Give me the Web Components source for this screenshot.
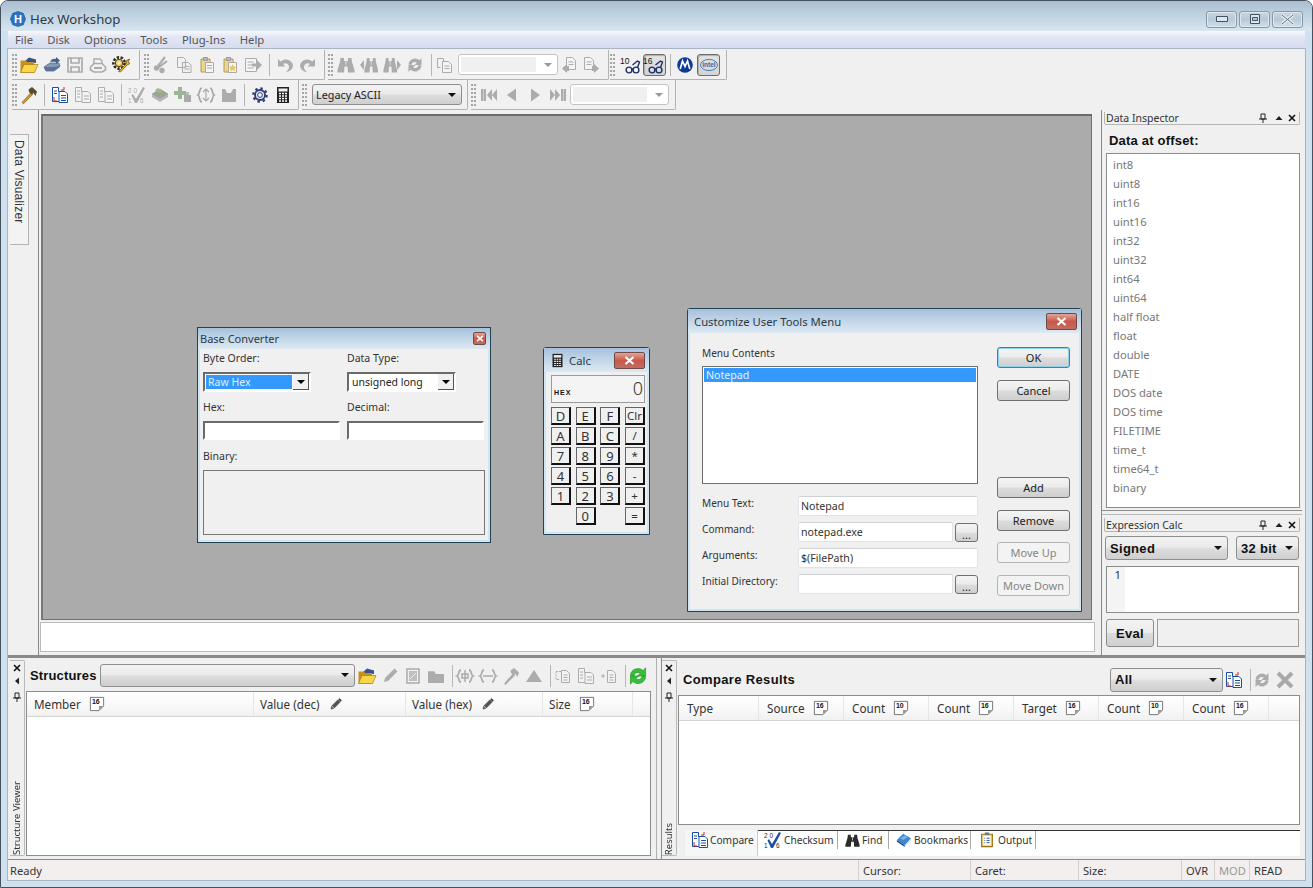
<!DOCTYPE html>
<html>
<head>
<meta charset="utf-8">
<title>Hex Workshop</title>
<style>
html,body{margin:0;padding:0;background:#fff}
body{width:1313px;height:888px;overflow:hidden;font:11.3px "Noto Sans","Liberation Sans",sans-serif;color:#333}
</style>
</head>
<body>
<hw-app>
  <hw-titlebar slot="top"></hw-titlebar>
  <hw-menubar slot="top"></hw-menubar>
  <hw-toolbars></hw-toolbars>
  <hw-workspace></hw-workspace>
  <hw-bottom></hw-bottom>
  <hw-status></hw-status>
</hw-app>
<script>
(function(){
  const HEAD = '"Liberation Sans",Arial,sans-serif';

  // icon drawings, all on an 18x18 box. mono ones follow currentColor so disabled is just grey
  const cycle = `<path d="M2.5 8.5A6.5 6.5 0 0 1 13.4 4.3L15.5 2v7h-7l2.4-2.4A3.4 3.4 0 0 0 5.500 9z"/><path d="M15.500 9.500A6.500 6.500 0 0 1 4.600 13.700L2.500 16V9h7l-2.400 2.400A3.400 3.400 0 0 0 12.500 9z"/>`;
  const bino = `<path d="M3.500 2h3.500v3h4V2h3.500l.5 4 2.500 8v2.500h-6.500l-.5-6H7.500l-.5 6H.500V14L3 6z"/><path d="M9 5v4" stroke="#f0f0f0" stroke-width=".8"/>`;
  const glasses = `<g fill="none" stroke="#1b2f63" stroke-width="1.400"><circle cx="9" cy="14" r="2.900"/><circle cx="16" cy="14" r="2.900"/><path d="M11.900 13.500c.6-.6 1.100-.6 1.300 0M17.500 11.500l2-5.500-2-1-5 4"/></g>`;
  const page = t => `<path d="M.5.500h17v11l-6 6H.5z" fill="#fff" stroke="#555"/><path d="M11.500 17.500v-6h6z" fill="#999"/><text x="2.500" y="9.500" font-size="9" font-family="Liberation Sans" font-weight="bold" fill="#111">${t}</text>`;
  const ICONS = {
    open:`<path d="M4 6l5-4.500 7 2V7z" fill="#34528d"/><path d="M.5 4.500h5.500l1 1.500h7V16.500H.5z" fill="#c88f1a"/><path d="M.5 16.500L4 8.500h14l-3.500 8z" fill="#f8d649" stroke="#ab7a12" stroke-width=".7"/>`,
    drive:`<path d="M1 11l6-4h9l1 3-6 5H3z" fill="#8498b8" stroke="#4c5f82" stroke-width=".7"/><path d="M1 11h10l6-1v1l-6 4H3z" fill="#5e7196"/><path d="M7 6c1-3 4-4 6-3V1l4 3.500L13 8V6c-2-.5-4-.5-6 0z" fill="#46618f"/>`,
    save:`<path d="M2 2h14v14H2zM5 2v5h8V2M5 16v-5h8v5" fill="none" stroke="currentColor" stroke-width="1.700"/>`,
    print:`<path d="M5 8V3h6l2 2v3" fill="none" stroke="currentColor" stroke-width="1.400"/><path d="M1.500 11L5 7.500h8l3.500 3.500v3L13 16H5l-3.500-2z" fill="none" stroke="currentColor" stroke-width="1.600"/><path d="M5 11h8v2H5z" fill="currentColor"/>`,
    tools:`<circle cx="7" cy="7" r="5.600" fill="none" stroke="#2e2a1c" stroke-width="2.600" stroke-dasharray="2.400 1.500"/><circle cx="7" cy="7" r="3.700" fill="#f5d25a" stroke="#4a3c1a" stroke-width="1"/><circle cx="7" cy="7" r="1.500" fill="#f0f0f0"/><path d="M6.500 15.500l7.500-7.500 .5-3.500L17.500 3l-1.500 3 2 1.500-3 1.500-6.500 7z" fill="#efb92c" stroke="#6d4d10" stroke-width=".8"/>`,
    cut:`<path d="M13 1L6 10M15 5L6 12" stroke="currentColor" stroke-width="2.200" fill="none"/><circle cx="4.500" cy="12" r="2.700" fill="currentColor"/><circle cx="10" cy="14.500" r="2.700" fill="currentColor"/>`,
    copy:`<g fill="#f0f0f0" stroke="currentColor"><path d="M2.500 1.500h6l2 2v8h-8zM7.500 6.500h6l2.500 2.500v7.500H7.500z"/></g><path d="M9.500 10.500h5M9.500 13h5" stroke="currentColor"/>`,
    paste:`<path d="M3 3h9v13H3z" fill="#ecd68c" stroke="#b59a55"/><path d="M5.500 1.500h4v3h-4z" fill="#bbb" stroke="#999"/><path d="M7.500 6.500h8v10h-8z" fill="#f4f4f4" stroke="#aaa"/><path d="M9 9.500h5M9 12h5" stroke="#aaa"/>`,
    pastes:`<path d="M3 3h9v13H3z" fill="#ecd68c" stroke="#b59a55"/><path d="M5.500 1.500h4v3h-4z" fill="#bbb" stroke="#999"/><path d="M7.500 6.500h8v10h-8z" fill="#f4f4f4" stroke="#aaa"/><path d="M11.500 8l1.200 2.500 2.800.3-2 1.900.5 2.800-2.500-1.400-2.500 1.400.5-2.800-2-1.900 2.800-.3z" fill="#e8c956"/>`,
    insert:`<path d="M1.500 2.500h11v13h-11z" fill="#f6f6f6" stroke="currentColor"/><path d="M3.500 6h6M3.500 9h6M3.500 12h6" stroke="currentColor"/><path d="M8 7.500h5V4l5 5-5 5v-3.500H8z" fill="currentColor"/>`,
    undo:`<path d="M2 3v7.500h7.500L7 8a3.800 3.800 0 0 1 6 2.500c.2 2-1 3.800-3 5.500 4.500-.5 7-3.500 7-7A7.500 7.500 0 0 0 4.700 5.500z" fill="currentColor"/>`,
    redo:`<g transform="matrix(-1 0 0 1 18 0)"><path d="M2 3v7.500h7.500L7 8a3.800 3.800 0 0 1 6 2.500c.2 2-1 3.800-3 5.500 4.500-.5 7-3.500 7-7A7.500 7.500 0 0 0 4.700 5.500z" fill="currentColor"/></g>`,
    bino:`<g fill="currentColor">${bino}</g>`,
    binol:`<g fill="currentColor"><g transform="translate(4 0) scale(.8 1)">${bino}</g><path d="M0 9l4-5v10z"/></g>`,
    binor:`<g fill="currentColor"><g transform="scale(.8 1)">${bino}</g><path d="M18 9l-4-5v10z"/></g>`,
    repl:`<g fill="currentColor">${cycle}</g>`,
    docr:`<path d="M1.500 2.500h6v5M1.500 2.500v9h3" fill="none" stroke="currentColor"/><path d="M6.500 5.500h6l3 3v8h-9z" fill="#f4f4f4" stroke="currentColor"/><path d="M8.500 10h5M8.500 12.500h5" stroke="currentColor"/>`,
    docl:`<path d="M5.500 1.500h6l3 3v9h-9z" fill="#f4f4f4" stroke="currentColor"/><path d="M7.500 6h5M7.500 8.500h5" stroke="currentColor"/><path d="M6 8L1 12.500l5 4.500v-2h2v-5H6z" fill="currentColor"/>`,
    docrr:`<path d="M2.500 1.500h6l3 3v9h-9z" fill="#f4f4f4" stroke="currentColor"/><path d="M4.500 6h5M4.500 8.500h5" stroke="currentColor"/><path d="M12 8l5 4.500-5 4.500v-2h-2v-5h2z" fill="currentColor"/>`,
    g10:`<svg x="-3" y="0" width="21" height="18" viewBox="0 0 21 18">${glasses}<text x="0" y="7.500" font-size="8.500" font-family="Liberation Sans" fill="#111">10</text></svg>`,
    g16:`<svg x="-3" y="0" width="21" height="18" viewBox="0 0 21 18">${glasses}<text x="0" y="7.500" font-size="8.500" font-family="Liberation Sans" fill="#111">16</text></svg>`,
    moto:`<circle cx="9" cy="9" r="7.800" fill="#0c3a96"/><path d="M4.200 13L6.500 5 9 10.500 11.500 5l2.300 8" fill="none" stroke="#fff" stroke-width="1.700"/>`,
    intel:`<ellipse cx="9" cy="9" rx="8.500" ry="5.600" fill="none" stroke="#2f7ab8" stroke-width=".9"/><text x="9" y="11.300" text-anchor="middle" font-size="6.500" font-family="Liberation Sans" font-weight="bold" fill="#1d6db0">intel</text>`,
    hammer:`<path d="M2 16.500l9-10 1.800 1.800-9.300 9.500z" fill="#d6962a" stroke="#6e4a0e" stroke-width=".6"/><path d="M8.500 3.500L12 1l5 4.500-1.500 4.500-2-3-2 1.500-2.500-2.500z" fill="#5a4a36"/>`,
    cmp:`<path d="M1.500 1.500h6v4h3v10h-9z" fill="#fff" stroke="#1c4f9c"/><path d="M8 5.500h6l2.500 2.500v8.500H8z" fill="#fff" stroke="#1c4f9c"/><path d="M3 5h3M3 7.500h3M10 9.500h5M10 12h5M10 14.500h5" stroke="#1c4f9c"/><path d="M3 11v4h3" fill="none" stroke="#d02525"/><path d="M13 1v3h-3" fill="none" stroke="#d02525"/>`,
    cmpm:`<path d="M1.500 1.500h6v4h3v10h-9z" fill="#f4f4f4" stroke="currentColor"/><path d="M8 5.500h6l2.500 2.500v8.500H8z" fill="#f4f4f4" stroke="currentColor"/><path d="M10 10h5M10 13h5M3 5h3M3 8h3M3 11h3" stroke="currentColor"/>`,
    check:`<text x="0" y="6.500" font-size="6.500" font-family="Liberation Sans" fill="currentColor">2 0</text><text x="0" y="16.500" font-size="6.500" font-family="Liberation Sans" fill="currentColor">1</text><path d="M5 8l3 5 7-12 2 1-8 15H7L3.500 9.500z" fill="var(--c,currentColor)"/><text x="12" y="16.500" font-size="6.500" font-family="Liberation Sans" fill="currentColor">6</text>`,
    stack:`<path d="M1 8l8-5 8 5-8 5z" fill="#9aa78e" stroke="#8a8a8a" stroke-width=".5"/><path d="M1 8v3l8 5 8-5V8l-8 5z" fill="#b6b6b6"/><path d="M7 2l5 3-3 2-5-3z" fill="#a6b593"/>`,
    plus:`<path d="M4 1h4v4h4v4H8v4H4V9H0V5h4z" fill="#9cb596"/><path d="M10 9h7v7h-7z" fill="#aaa"/><path d="M12 6h3v3h-3z" fill="#bbb"/>`,
    brace:`<path d="M5 2C2 2 3 8 1 9c2 1 1 7 4 7M13 2c3 0 2 6 4 7-2 1-1 7-4 7" fill="none" stroke="#9fb09a" stroke-width="1.700"/><path d="M6 6l3-3 3 3M6 12l3 3 3-3M9 3v12" fill="none" stroke="#aaa" stroke-width="1.200"/>`,
    chart:`<path d="M2 3h3l2 4h4l2-4h3v13H2z" fill="currentColor"/>`,
    gear:`<g transform="translate(9 9)"><circle r="5" fill="#e6e9f4" stroke="#2e3c78" stroke-width="1.800"/><circle r="6.600" fill="none" stroke="#2e3c78" stroke-width="2.400" stroke-dasharray="2.400 2.800"/><circle r="2.400" fill="#f4f4f4" stroke="#2e3c78"/></g>`,
    calc:`<path d="M3 1h12v16H3z" fill="#222"/><path d="M4.500 2.500h9v3h-9z" fill="#eee"/><path d="M5 7.500h2M8 7.500h2M11 7.500h2M5 10h2M8 10h2M11 10h2M5 12.500h2M8 12.500h2M11 12.500h2M5 15h2M8 15h2M11 15h2" stroke="#fff" stroke-width="1.300"/>`,
    first:`<path d="M1 3h2.500v12H1zM4 3h2v12H4zM7 9l5-6v12zM12 9l5-6v12z" fill="currentColor"/>`,
    prev:`<path d="M4 9l9-6.500v13z" fill="currentColor"/>`,
    next:`<path d="M14 9L5 2.500v13z" fill="currentColor"/>`,
    last:`<g transform="matrix(-1 0 0 1 18 0)"><path d="M1 3h2.500v12H1zM4 3h2v12H4zM7 9l5-6v12zM12 9l5-6v12z" fill="currentColor"/></g>`,
    pencil:`<path d="M3 15l1-4 8-8 3 3-8 8z" fill="currentColor"/><path d="M12 3l1.500-1.500 3 3L15 6" fill="currentColor"/>`,
    penb:`<path d="M2.500 15.500l1-4 8-8 3 3-8 8z" fill="#555" stroke="#222" stroke-width=".5"/><path d="M3.500 11.500l3 3" stroke="#eee"/><path d="M12 3l1.500-1.500 3 3L15 6z" fill="#333"/>`,
    sheet:`<path d="M3 2h12v14H3z" fill="none" stroke="currentColor" stroke-width="1.500"/><path d="M5 4h8v10H5z" fill="currentColor" opacity=".7"/><path d="M6 12l6-6" stroke="#eee"/>`,
    folderg:`<path d="M1 5h6l2 2h8v9H1z" fill="currentColor"/><path d="M1 4h6l1.500 2H1z" fill="currentColor" opacity=".75"/>`,
    bracea:`<path d="M5 3C2 3 3.500 8 1 9c2.500 1 1 6 4 6M13 3c3 0 1.500 5 4 6-2.500 1-1 6-4 6" fill="none" stroke="currentColor" stroke-width="1.800"/><path d="M6 7h6v4H6zM9 3v12" fill="none" stroke="currentColor" stroke-width="1.500"/>`,
    braceb:`<path d="M5 3C2 3 3.500 8 1 9c2.500 1 1 6 4 6M13 3c3 0 1.500 5 4 6-2.500 1-1 6-4 6" fill="none" stroke="currentColor" stroke-width="1.800"/><path d="M4 9h10" stroke="currentColor" stroke-width="1.500"/>`,
    hammerg:`<path d="M2 16.500l9-10 2 2-9.500 9.500z" fill="currentColor"/><path d="M8.500 3.500L12 1l5 4.500-1.500 4.500-2-3-2 1.500-2.500-2.500z" fill="currentColor"/>`,
    tri:`<path d="M9 3l8 12H1z" fill="currentColor"/>`,
    dl:`<path d="M2 4.500h5M2 4.500v8h3" fill="none" stroke="currentColor" stroke-dasharray="2 1"/><path d="M7.500 3.500h5l3 3v9h-8z" fill="#f4f4f4" stroke="currentColor"/><path d="M9.500 8h4M9.500 10.500h4M9.500 13h4" stroke="currentColor"/>`,
    dm:`<path d="M1 9h4M3 7v4" stroke="currentColor"/><path d="M7.500 3.500h5l3 3v9h-8z" fill="#f4f4f4" stroke="currentColor"/><path d="M9.500 8h4M9.500 10.500h4M9.500 13h4" stroke="currentColor"/>`,
    refresh:`<g fill="#35c035" stroke="#1c8a1c" stroke-width=".5"><g transform="translate(-1.500 -1.500) scale(1.170)">${cycle}</g></g>`,
    book:`<path d="M1 9l7-7 9 5-7 8z" fill="#3f86cf"/><path d="M1 9l9 6v2l-9-6z" fill="#1d4c86"/><path d="M10 15l7-8v2l-7 8z" fill="#d8e4f2"/><path d="M5 7l5-3 3 2-5 3z" fill="#7db3e6"/>`,
    output:`<path d="M3 2.500h12v14H3z" fill="#f4dd8a" stroke="#9c6f11" stroke-width="1.300"/><path d="M5 4.500h8v10H5z" fill="#fff"/><path d="M6.500 0.500h5v3h-5z" fill="#777"/><path d="M6 7h1M8.500 7H12M6 9.500h1M8.500 9.500H12M6 12h1M8.500 12H12" stroke="#1d4c86"/>`,
    n16:page('16'),
    n10:page('10'),
    x:`<path d="M2 2l14 14M16 2L2 16" stroke="#a9a9a9" stroke-width="4"/>`,
    hex:`<path d="M9 .5l6 2 2.500 6.500L15 15.500l-6 2-6-2L.5 9 3 2.500z" fill="#2a73c4" stroke="#134a8a" stroke-width=".6"/>`
  };

  // little helper so each element is just: tag, css, markup
  function comp(tag, css, html) {
    customElements.define(tag, class extends HTMLElement {
      connectedCallback() {
        if (this.shadowRoot) return;
        const root = this.attachShadow({mode:'open'});
        root.innerHTML = `<style>${css}</style>` + (typeof html === 'function' ? html(this) : html);
      }
    });
  }
  const at = (el, n, d) => el.hasAttribute(n) ? el.getAttribute(n) : d;

  comp('hw-app', `
    :host{display:flex;flex-direction:column;width:1313px;height:888px;box-sizing:border-box;
      background:#cfe0ee;border:1px solid #46525f;border-radius:8px 8px 0 0;overflow:hidden}
    .client{flex:1;display:flex;flex-direction:column;margin:0 7px 7px 7px;background:#f0f0f0;box-shadow:0 0 0 1px #a9b5c0;min-height:0}
  `, `<slot name="top"></slot><div class="client"><slot></slot></div>`);

  comp('hw-icon', `
    :host{display:inline-flex;align-items:center;justify-content:center;flex:none;width:23px;height:22px;color:#2b2b2b;box-sizing:border-box}
    :host([off]){color:#a0a0a0}
    :host([off]) svg.c{filter:grayscale(.6) opacity(.85)}
    :host([on]){background:linear-gradient(#e4e4e4,#d4d4d4);border:1px solid #6d6d6d;border-radius:3px;box-shadow:inset 1px 1px 1px #aaa}
    svg{display:block;overflow:visible}
  `, el => {
    const s = at(el,'s','18');
    if (el.hasAttribute('w')) el.style.width = at(el,'w') + 'px';
    if (el.hasAttribute('h')) el.style.height = at(el,'h') + 'px';
    return `<svg class="c" width="${s}" height="${s}" viewBox="0 0 18 18">${ICONS[at(el,'name')]||''}</svg>`;
  });

  comp('hw-titlebar', `
    :host{display:flex;align-items:center;height:30px;box-sizing:border-box;padding:6px 9px 0 9px;
      background:linear-gradient(#a9bdd0,#bccfde 40%,#d8e6f0)}
    .t{margin-left:4px;color:#2f3a44;font-size:13.200px}
    .h{position:relative;width:16px;height:16px;flex:none}
    .h b{position:absolute;inset:0;text-align:center;color:#fff;font:bold 11px/16px ${HEAD}}
    .b{margin-left:auto;display:flex;gap:2px}
    .b i{display:flex;align-items:center;justify-content:center;width:29px;height:15px;border:1px solid #8797a6;border-radius:3px;background:linear-gradient(#c9d6e2,#b7c8d6 50%,#d3e0ea);box-shadow:inset 0 0 0 1px #dfe8ef}
  `, `<div class="h"><hw-icon name="hex" s="16" w="16" h="16"></hw-icon><b>H</b></div><span class="t">Hex Workshop</span>
      <div class="b">
        <i><svg width="12" height="6"><path d="M.5.500h11v5H.5z" fill="#dfe6ec" stroke="#3f5266"/></svg></i>
        <i><svg width="12" height="10"><path d="M1.500.500h9v9h-9z" fill="#dfe6ec" stroke="#3f5266"/><path d="M3.500 3.500h5v3h-5z" fill="#b7c8d6" stroke="#3f5266"/></svg></i>
        <i><svg width="15" height="11"><path d="M2 1l11 9M13 1L2 10" stroke="#e6edf3" stroke-width="3.500"/><path d="M2 1l11 9M13 1L2 10" stroke="#5b6d80"/></svg></i>
      </div>`);

  comp('hw-menubar', `
    :host{display:flex;align-items:center;height:18px;margin:0 7px;box-sizing:border-box;font-size:11.300px;color:#555;
      background:linear-gradient(#f7f9fc,#e2e6f4 35%,#d7dcef);border-bottom:1px solid #a7a7a7}
    span{padding:0 0 0 7px;margin-right:7.200px}
  `, ['File','Disk','Options','Tools','Plug-Ins','Help'].map(m=>`<span>${m}</span>`).join(''));

  comp('hw-band', `
    :host{display:flex;align-items:center;height:30px;box-sizing:border-box;background:#f1f1f1;
      border-right:1px solid #b3b3b3;border-bottom:1px solid #b3b3b3;border-bottom-right-radius:2px;flex:none;padding-right:var(--pr,6px)}
    .g{width:5px;height:24px;flex:none;background:radial-gradient(circle at 1px 1px,#a5a5a5 .8px,transparent 1px) 0 1px/3px 4px}
  `, `<div class="g"></div><slot></slot>`);

  comp('hw-sep', `:host{display:block;flex:none;width:1px;height:22px;background:#b5b5b5;margin:0 var(--mr,4px) 0 var(--ml,4px)}`, ``);

  comp('hw-combo', `
    :host{display:flex;align-items:center;flex:none;box-sizing:border-box;height:21px;border:1px solid #8e8e8e;border-radius:3px;padding-left:3px;
      background:linear-gradient(#f3f3f3,#ebebeb 45%,#dcdcdc 55%,#cfcfcf);color:#222;font-size:10.800px;overflow:hidden}
    :host([bold]){font:bold 13px ${HEAD};letter-spacing:.3px;color:#111;padding-left:4px}
    :host([off]){background:#fff;border-color:#c4c4c4;padding:2px 0 2px 2px}
    .v{flex:1;white-space:nowrap}
    :host([off]) .v{align-self:stretch;background:#f0f0f0;flex:none;width:78%}
    .a{margin-left:auto;width:0;height:0;border:4px solid transparent;border-top:4px solid #111;border-bottom:0;margin-right:5px}
    :host([off]) .a{border-top-color:#999}
  `, el => {
    el.style.width = at(el,'w','100') + 'px';
    if (el.hasAttribute('h')) el.style.height = at(el,'h') + 'px';
    return `<span class="v">${at(el,'v','')}</span><span class="a"></span>`;
  });

  comp('hw-toolbars', `
    :host{display:flex;flex-direction:column;flex:none}
    .r{display:flex;height:31px;padding:1px 0 0 4px;box-sizing:border-box}
    .r + .r{height:30px;padding-top:0}
    hw-band + hw-band{margin-left:4px}
    .r + .r hw-sep{--mr:3px}
  `, () => {
    const row = (names, w) => names.split(' ').map(n => {
      if (n === '|') return '<hw-sep></hw-sep>';
      const off = n[0] === '-';
      return `<hw-icon name="${n.replace('-','')}"${off?' off':''}${w?` w="${w}"`:''}></hw-icon>`;
    }).join('');
    return `<div class="r">
      <hw-band style="--pr:7px">${row('open drive -save -print tools')}</hw-band>
      <hw-band style="--pr:5px">${row('-cut -copy paste pastes -insert')}<hw-sep style="--ml:5px;--mr:3px"></hw-sep>${row('-undo -redo')}</hw-band>
      <hw-band style="--pr:7px;margin-left:3px"><span style="width:1px"></span>${row('-bino -binol -binor -repl')}<hw-sep style="--ml:5px;--mr:2px"></hw-sep><hw-icon name="docr" off w="22" style="margin-right:2px"></hw-icon><hw-combo off w="100" style="margin-right:1px"></hw-combo>${row('-docl -docrr', 21)}</hw-band>
      <hw-band style="--pr:6px;margin-left:1px"><hw-icon name="g10" w="22" style="margin-left:6px"></hw-icon><hw-icon name="g16" on></hw-icon><hw-sep></hw-sep><hw-icon name="moto" w="19" style="margin-right:3px"></hw-icon><hw-icon name="intel" on></hw-icon></hw-band>
    </div>
    <div class="r">
      <hw-band style="--pr:4px">${row('hammer | cmp -cmpm -cmpm | -check stack plus brace -chart | gear calc')}</hw-band>
      <hw-band style="--pr:5px;margin-left:3px"><hw-combo w="150" v="Legacy ASCII" style="margin-left:5px"></hw-combo></hw-band>
      <hw-band style="--pr:6px;margin-left:3px"><span style="width:1.500px"></span>${row('-first -prev -next -last')}<hw-combo off w="99"></hw-combo></hw-band>
    </div>`;
  });

  comp('hw-workspace', `
    :host{display:flex;flex:1;min-height:0}
    .left{width:30px;flex:none;padding:24px 0 0 2px;box-sizing:border-box}
    .tab{writing-mode:vertical-rl;width:19px;height:111px;box-sizing:border-box;font:12px ${HEAD};letter-spacing:.2px;color:#333;padding:5px 1px 0 0;
      border:1px solid #b5b5b5;border-left:0;line-height:17px;background:#f3f3f3}
    .mid{width:1060px;flex:none;display:flex;flex-direction:column;border-left:1px solid #8a8a8a;box-sizing:border-box;padding:4px 6px 3px 2px;position:relative}
    .right{flex:1;margin-left:3px;border-left:1px solid #8a8a8a;display:flex}
    .msg{height:28px;flex:none;background:#fff;border:1px solid #bcbcbc;margin:2px -3px 0 -1px}
  `, `<div class="left"><div class="tab">Data Visualizer</div></div>
      <div class="mid"><hw-mdi></hw-mdi><div class="msg"></div></div>
      <div class="right"><hw-inspector></hw-inspector></div>`);

  comp('hw-mdi', `
    :host{display:block;position:relative;flex:1;background:#ababab;border:1px solid #707070;border-top:2px solid #6a6a6a;border-left:2px solid #777;box-sizing:border-box}
  `, `<hw-base-converter></hw-base-converter><hw-calc></hw-calc><hw-tools-dialog></hw-tools-dialog>`);

  // floating mdi child / dialog frame. x,y are its place on the grey desktop
  comp('hw-window', `
    :host{position:absolute;display:flex;flex-direction:column;box-sizing:border-box;background:#f0f0f0;
      border:1px solid #24424f;box-shadow:inset 0 0 0 2px #cfe6f3;border-radius:var(--r,0)}
    .bar{display:flex;align-items:center;height:var(--bh,21px);flex:none;padding:0 4px 0 var(--bp,2px);box-sizing:border-box;
      background:linear-gradient(#a6c1dc,#c2d6e8 50%,#dde9f3);color:#2c3a46;font-size:var(--tf,11.300px)}
    .x{margin-left:auto;display:flex;align-items:center;justify-content:center;box-sizing:border-box;height:var(--ch,17px);width:var(--cw,31px);
      border:1px solid #6e4b48;border-radius:2px;background:linear-gradient(#e3a598,#c9594a 50%,#c06e62);color:#fff}
    .x svg{display:block;width:var(--xw,11px)}
    .body{flex:1;min-height:0;margin:0 2px 2px 2px}
  `, el => {
    el.style.left = at(el,'x') + 'px'; el.style.top = at(el,'y') + 'px';
    el.style.width = at(el,'w') + 'px'; el.style.height = at(el,'h') + 'px';
    return `<div class="bar"><slot name="icon"></slot><span>${at(el,'label')}</span>
      <span class="x"><svg width="11" height="9" viewBox="0 0 11 9"><path d="M1.500 1l8 7M9.500 1l-8 7" stroke="#fff" stroke-width="2.200"/></svg></span></div>
      <div class="body"><slot></slot></div>`;
  });

  comp('hw-input', `
    :host{display:flex;align-items:center;box-sizing:border-box;height:20px;background:#fff;padding-left:2px;font-size:10.600px;color:#333;
      border:1px solid #e2e3ea;border-top-color:#d0d1d6;border-radius:2px}
    :host([sunken]){border-radius:0;border:2px solid #fff;border-left-color:#6a6a6a;border-top-color:#6a6a6a;height:20px}
  `, `<slot></slot>`);

  comp('hw-btn', `
    :host{display:flex;align-items:center;justify-content:center;box-sizing:border-box;height:21px;font-size:11px;color:#222;
      border:1px solid #707070;border-radius:3px;background:linear-gradient(#f4f4f4,#ebebeb 48%,#dcdcdc 52%,#cfcfcf)}
    :host([def]){border:1px solid #3c7fb1;box-shadow:inset 0 0 0 1px #8fd2ea}
    :host([off]){border-color:#b5b5b5;background:#f3f3f3;color:#858585}
  `, `<slot></slot>`);

  comp('hw-oldcombo', `
    :host{display:flex;box-sizing:border-box;width:108px;height:20px;background:#fff;border:2px solid #fff;border-left-color:#6a6a6a;border-top-color:#6a6a6a;font-size:10.500px;color:#222}
    .v{flex:1;padding-left:2px;line-height:14px;margin:1px;white-space:nowrap}
    :host([sel]) .v{background:#3399ff;color:#dff0ff}
    .a{flex:none;width:16px;display:flex;align-items:center;justify-content:center;background:#f0f0f0;border-right:1px solid #555;border-bottom:1px solid #555;box-sizing:border-box}
    .a i{width:0;height:0;border:4px solid transparent;border-top:4px solid #000;border-bottom:0}
  `, el => `<span class="v">${at(el,'v')}</span><span class="a"><i></i></span>`);

  comp('hw-base-converter', `
    :host{display:contents}
    .f{display:grid;grid-template-columns:137px 137px;column-gap:7px;padding:0 0 0 3px;font-size:10.500px;color:#333}
    label{display:block;height:14px;line-height:14px}
    .a{margin-top:2px}.b{margin-top:8px}.c{margin-top:7px}
    .bin{margin:7px 3px 0 3px;height:65px;box-sizing:border-box;border:1px solid #777;background:#f0f0f0}
    .l{margin:9px 0 0 3px;height:14px;line-height:14px;color:#333;font-size:10.500px}
    hw-input{width:137px;height:19px}
  `, `<hw-window x="154" y="211" w="294" h="216" label="Base Converter" style="--cw:13px;--ch:13px;--xw:8px;--bh:21px;--tf:11px">
      <div class="f">
        <label class="a">Byte Order:</label><label class="a">Data Type:</label>
        <hw-oldcombo class="c" v="Raw Hex" sel></hw-oldcombo><hw-oldcombo class="c" v="unsigned long" style="width:109px"></hw-oldcombo>
        <label class="b">Hex:</label><label class="b">Decimal:</label>
        <hw-input class="c" sunken></hw-input><hw-input class="c" sunken></hw-input>
      </div>
      <div class="l">Binary:</div>
      <div class="bin"></div>
    </hw-window>`);

  comp('hw-calc', `
    :host{display:contents}
    .d{margin:3px 2px 0 5px;height:28px;box-sizing:border-box;border:1px solid #9a9a9a;background:#f4f4f4;display:flex;align-items:flex-end;justify-content:space-between;padding:0 1px 0 2px}
    .d small{font:bold 7px ${HEAD};letter-spacing:1px;color:#111;margin-bottom:6px}
    .d b{font:300 18px "Noto Sans",sans-serif;color:#333;line-height:24px;margin-bottom:2px}
    .k{display:grid;grid-template-columns:repeat(4,20px);grid-auto-rows:18px;gap:2px 4.700px;margin:4px 0 0 5px}
    .k span{display:flex;align-items:center;justify-content:center;box-sizing:border-box;border:1px solid #666;border-right:2px solid #111;border-bottom:2px solid #111;font-size:13px;color:#333}
    .k .e{visibility:hidden}
    .k .s{font-size:11.500px}
  `, () => {
    const keys = 'D E F Clr A B C / 7 8 9 * 4 5 6 - 1 2 3 + _ 0 _ ='.split(' ');
    return `<hw-window x="500" y="231" w="107" h="188" label="Calc" style="--cw:31px;--bh:24px;--tf:11.300px;--r:3px 3px 0 0">
      <hw-icon slot="icon" name="calc" s="15" w="20" h="16" style="margin-right:2px;margin-left:1px"></hw-icon>
      <div class="d"><small>HEX</small><b>0</b></div>
      <div class="k">${keys.map(k=>k==='_'?'<span class="e"></span>':`<span class="${k.length>1||'/*-+='.includes(k)?'s':''}">${k}</span>`).join('')}</div>
    </hw-window>`;
  });

  comp('hw-tools-dialog', `
    :host{display:contents}
    .m{display:flex;padding:0;height:100%;box-sizing:border-box;font-size:10.100px;color:#333}
    .l{width:276px;margin:13px 0 0 12px;flex:none}
    .cap{height:14px;line-height:14px}
    .list{margin-top:6px;height:118px;box-sizing:border-box;border:1px solid #6f6f6f;background:#fff;padding:1px;font-size:10.600px}
    .list div{background:#3399ff;color:#e6f3ff;height:14px;line-height:14px;padding-left:2px}
    .g{display:grid;grid-template-columns:96px 1fr;row-gap:6px;margin-top:12px;align-items:start}
    .g span{line-height:14px;margin-top:0}
    .row{display:flex;gap:2px}
    .row hw-input{flex:1}
    .row hw-btn{width:23px;flex:none;height:19px;align-items:flex-end;margin-top:1px;line-height:12px}
    .r{margin:14px 0 0 19px;width:73px;display:flex;flex-direction:column}
    .r hw-btn + hw-btn{margin-top:12px}
    .r .gap{margin-top:76px !important}
    .r hw-btn.t{margin-top:11px}
  `, `<hw-window x="644" y="192" w="395" h="304" label="Customize User Tools Menu" style="--cw:31px;--bh:24px;--bp:6px;--r:3px 3px 0 0">
      <div class="m">
        <div class="l">
          <div class="cap">Menu Contents</div>
          <div class="list"><div>Notepad</div></div>
          <div class="g">
            <span>Menu Text:</span><hw-input>Notepad</hw-input>
            <span>Command:</span><div class="row"><hw-input>notepad.exe</hw-input><hw-btn>...</hw-btn></div>
            <span>Arguments:</span><hw-input>$(FilePath)</hw-input>
            <span>Initial Directory:</span><div class="row"><hw-input></hw-input><hw-btn>...</hw-btn></div>
          </div>
        </div>
        <div class="r">
          <hw-btn def>OK</hw-btn><hw-btn>Cancel</hw-btn>
          <hw-btn class="gap">Add</hw-btn><hw-btn>Remove</hw-btn><hw-btn off class="t">Move Up</hw-btn><hw-btn off>Move Down</hw-btn>
        </div>
      </div>
    </hw-window>`);

  // caption of a docked pane, with pin / up / close
  comp('hw-dockhead', `
    :host{display:flex;align-items:center;height:14px;flex:none;box-sizing:border-box;border:1px solid #b5b5b5;border-top:0;border-radius:0 0 2px 2px;padding:0 3px 0 1px;font-size:10.500px;color:#333;line-height:12px}
    .c{margin-left:auto;display:flex;align-items:center}
  `, el => `<span>${at(el,'label')}</span><span class="c">
      <svg style="margin-right:8px" width="8" height="10"><path d="M2 1h4v5H2zM0 6h8M4 6v4" fill="none" stroke="#222"/></svg>
      <svg style="margin-right:5px" width="8" height="6"><path d="M4 1l3.500 4H.500z" fill="#222"/></svg>
      <svg width="8" height="8"><path d="M1 1l6 6M7 1L1 7" stroke="#111" stroke-width="1.600"/></svg></span>`);

  comp('hw-inspector', `
    :host{display:flex;flex-direction:column;width:198px;padding:2px 0 0 2px;box-sizing:border-box}
    .h{font:bold 13px ${HEAD};color:#111;height:28px;line-height:31px;padding-left:5px;letter-spacing:.2px;flex:none}
    .list{margin-left:2px;width:194px;height:355px;box-sizing:border-box;border:1px solid #8c8c8c;background:#fff;padding:1px 0 0 6px;color:#777;font-size:11.200px;line-height:19px;flex:none}
    .list div{height:19px}
    .split{height:3px;box-sizing:content-box;background:#f0f0f0;border-top:1px solid #8c8c8c;border-bottom:1px solid #b8b8b8;margin:2px -2px 3px -2px;flex:none}
    .combos{display:flex;gap:8px;margin:4px 0 0 1px}
    .ed{margin:6px 0 0 2px;width:193px;height:47px;box-sizing:border-box;border:1px solid #8c8c8c;background:#fff;display:flex;flex:none}
    .ed span{width:18px;background:#f4f4f4;text-align:right;padding:0 4px 0 0;box-sizing:border-box;line-height:15px;color:#333}
    .ev{display:flex;gap:3px;margin:6px 0 0 2px}
    .ev hw-btn{width:48px;height:28px;font:bold 13px ${HEAD};letter-spacing:.3px;color:#111;border-color:#8c8c8c}
    .ev div{width:142px;height:28px;box-sizing:border-box;border:1px solid #9a9a9a;background:#f0f0f0}
  `, () => {
    const rows = ['int8','uint8','int16','uint16','int32','uint32','int64','uint64','half float','float','double','DATE','DOS date','DOS time','FILETIME','time_t','time64_t','binary'];
    return `<hw-dockhead label="Data Inspector" style="height:13px"></hw-dockhead>
      <div class="h">Data at offset:</div>
      <div class="list">${rows.map(r=>`<div>${r}</div>`).join('')}</div>
      <div class="split"></div>
      <hw-dockhead label="Expression Calc"></hw-dockhead>
      <div class="combos"><hw-combo bold w="123" h="24" v="Signed"></hw-combo><hw-combo bold w="63" h="24" v="32 bit"></hw-combo></div>
      <div class="ed"><span>1</span></div>
      <div class="ev"><hw-btn>Eval</hw-btn><div></div></div>`;
  });

  comp('hw-strip', `
    :host{display:flex;flex-direction:column;align-items:center;width:15px;flex:none;box-sizing:border-box;border:1px solid #b9b9b9;border-left:0;border-radius:0 2px 2px 0;padding-top:3px}
    svg{display:block;margin-bottom:5px}
    .t{margin-top:auto;writing-mode:vertical-rl;transform:rotate(180deg);font-size:9.500px;color:#333;line-height:14px;padding:0 0 2px 0}
  `, el => `<svg width="8" height="8"><path d="M1 1l6 6M7 1L1 7" stroke="#111" stroke-width="1.600"/></svg>
      <svg width="6" height="8"><path d="M1 4l4-3.500v7z" fill="#222"/></svg>
      <svg style="margin-top:2px" width="8" height="10"><path d="M2 1h4v5H2zM0 6h8M4 6v4" fill="none" stroke="#222"/></svg>
      <span class="t">${at(el,'label')}</span>`);

  comp('hw-col', `
    :host{display:flex;align-items:center;box-sizing:border-box;flex:none;height:100%;padding-left:var(--pad,6px);border-right:1px solid #e6e6e6;font-size:11.700px;color:#333;gap:8px}
  `, el => {
    el.style.width = at(el,'w') + 'px';
    const ic = at(el,'icon');
    return `<span>${at(el,'label','')}</span>` + (ic ? `<hw-icon name="${ic}" s="14" w="16" h="16"></hw-icon>` : '');
  });

  comp('hw-grid', `
    :host{display:flex;flex-direction:column;box-sizing:border-box;border:1px solid #8c8c8c;background:#fff;flex:1;min-height:0}
    .h{display:flex;height:24px;flex:none;background:linear-gradient(#fff,#f8f8f8 60%,#f1f1f1);border-bottom:1px solid #d4d4d4}
  `, `<div class="h"><slot></slot></div>`);

  comp('hw-tabs', `
    :host{display:flex;height:26px;flex:none;margin-left:7px;background:#fff;border-top:1px solid #333;font-size:10.200px;color:#333;box-sizing:border-box}
    span{display:flex;align-items:center;gap:1px;border-right:1px solid #aaa;height:18px;box-sizing:border-box;padding:0 2px 0 5px;flex:none}
    span.s{background:#f6f6f6;margin-top:-1px;height:26px;border-right:1px solid #ccc;align-items:flex-start;padding-top:1px}
    i{font-style:normal;white-space:nowrap;line-height:18px}
  `, () => `<span class="s" style="width:73px"><hw-icon name="cmp" w="19" h="18"></hw-icon><i>Compare</i></span>
      <span style="width:80px"><hw-icon name="check" w="20" h="18" style="--c:#1f4fa3"></hw-icon><i>Checksum</i></span>
      <span style="width:51px"><hw-icon name="bino" w="18" h="18" s="15"></hw-icon><i>Find</i></span>
      <span style="width:82px"><hw-icon name="book" w="19" h="18" s="16"></hw-icon><i>Bookmarks</i></span>
      <span style="width:65px"><hw-icon name="output" w="21" h="18" s="16"></hw-icon><i>Output</i></span>`);

  comp('hw-bottom', `
    :host{display:flex;height:205px;flex:none;border-top:3px solid #8a8a8a;border-bottom:1px solid #8a8a8a;box-sizing:border-box;padding:2px 0 3px 2px;background:#f0f0f0}
    .p{display:flex;flex-direction:column;min-width:0}
    .ph{display:flex;align-items:center;flex:none;box-sizing:border-box}
    .ti{font:bold 13px ${HEAD};color:#111;letter-spacing:.15px}
    .split{width:4px;flex:none;box-sizing:content-box;border-left:1px solid #b0b0b0;border-right:1px solid #8a8a8a;margin:-2px 0 -3px 5px}
    hw-sep{--ml:5px;--mr:0}
    .cmp{--pad:8px}
  `, () => {
    const row = s => s.split(' ').map(n => n==='|'?'<hw-sep></hw-sep>':`<hw-icon name="${n.replace('-','')}"${n[0]==='-'?' off':''}></hw-icon>`).join('');
    return `<hw-strip label="Structure Viewer"></hw-strip>
      <div class="p" style="width:625px;margin-left:1px">
        <div class="ph" style="height:31px;padding-left:4px"><span class="ti" style="width:70px">Structures</span><hw-combo w="255" h="23" style="margin-top:-1px"></hw-combo>
          <hw-icon name="open"></hw-icon>${row('-pencil -sheet -folderg | -bracea -braceb -hammerg -tri | -dl -cmpm -dm | refresh')}</div>
        <hw-grid><hw-col w="227" label="Member" icon="n16" style="--pad:7px"></hw-col><hw-col w="152" label="Value (dec)" icon="penb"></hw-col><hw-col w="137" label="Value (hex)" icon="penb"></hw-col><hw-col w="90" label="Size" icon="n16"></hw-col></hw-grid>
      </div>
      <div class="split"></div>
      <hw-strip label="Results"></hw-strip>
      <div class="p cmp" style="width:622px;margin-left:1px">
        <div class="ph" style="height:35px;padding:4px 0 0 5px"><span class="ti" style="width:427px;letter-spacing:.35px">Compare Results</span><hw-combo bold w="113" h="24" v="All"></hw-combo><hw-icon name="cmp" w="22"></hw-icon><hw-sep></hw-sep><hw-icon name="repl" off w="22"></hw-icon><hw-icon name="x" w="24"></hw-icon></div>
        <hw-grid><hw-col w="80" label="Type"></hw-col><hw-col w="85" label="Source" icon="n16"></hw-col><hw-col w="85" label="Count" icon="n10"></hw-col><hw-col w="85" label="Count" icon="n16"></hw-col><hw-col w="85" label="Target" icon="n16"></hw-col><hw-col w="85" label="Count" icon="n10"></hw-col><hw-col w="85" label="Count" icon="n16"></hw-col></hw-grid>
        <hw-tabs style="margin-top:5px"></hw-tabs>
      </div>`;
  });

  comp('hw-status', `
    :host{display:flex;height:20px;flex:none;align-items:center;background:#f3efef;font-size:11.100px;color:#333;box-sizing:border-box;padding-left:2px}
    span{height:100%;display:flex;align-items:center;box-sizing:border-box;padding:1px 0 0 4px;border-left:1px solid #d3d0d0;flex:none}
    .a{width:848px;border:0;padding-left:0}
    .off{color:#999}
  `, `<span class="a">Ready</span><span style="width:112px">Cursor:</span><span style="width:108px">Caret:</span><span style="width:103px">Size:</span>
      <span style="width:33px">OVR</span><span class="off" style="width:35px">MOD</span><span style="width:36px">READ</span>`);
})();
</script>
</body>
</html>
